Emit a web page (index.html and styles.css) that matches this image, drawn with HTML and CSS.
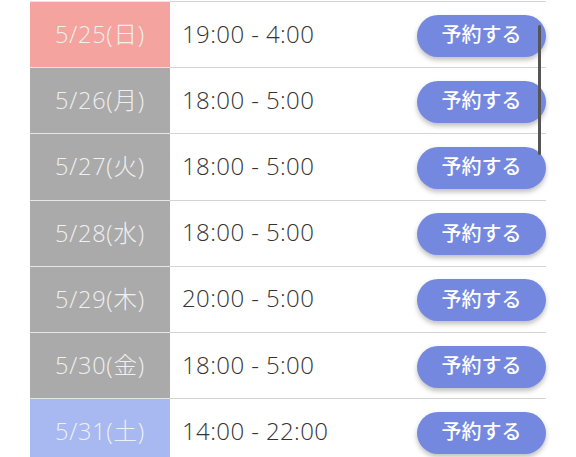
FILE: index.html
```html
<!DOCTYPE html>
<html lang="ja">
<head>
<meta charset="utf-8">
<link rel="stylesheet" href="styles.css">
</head>
<body>
<div class="wrap">
  <table class="schedule">
    <tr><td class="date sun">5/25(日)</td><td class="time">19:00 - 4:00</td><td class="act"><button class="btn">予約する</button></td></tr>
    <tr><td class="date">5/26(月)</td><td class="time">18:00 - 5:00</td><td class="act"><button class="btn">予約する</button></td></tr>
    <tr><td class="date">5/27(火)</td><td class="time">18:00 - 5:00</td><td class="act"><button class="btn">予約する</button></td></tr>
    <tr><td class="date">5/28(水)</td><td class="time">18:00 - 5:00</td><td class="act"><button class="btn">予約する</button></td></tr>
    <tr><td class="date">5/29(木)</td><td class="time">20:00 - 5:00</td><td class="act"><button class="btn">予約する</button></td></tr>
    <tr><td class="date">5/30(金)</td><td class="time">18:00 - 5:00</td><td class="act"><button class="btn">予約する</button></td></tr>
    <tr><td class="date sat">5/31(土)</td><td class="time">14:00 - 22:00</td><td class="act"><button class="btn">予約する</button></td></tr>
  </table>
  <div class="scrollthumb"></div>
</div>
</body>
</html>
```
FILE: styles.css
```css
html, body {
  margin: 0;
  padding: 0;
  background: #fff;
  overflow: hidden;
}
.wrap {
  position: relative;
  padding: 1px 30px 0 30px;
}
.schedule {
  width: 516px;
  border-collapse: collapse;
  font-family: "Open Sans", "Noto Sans CJK JP", sans-serif;
  font-weight: 300;
}
.schedule tr {
  height: 66.2px;
  border-top: 1px solid #d4d4d4;
}
.date {
  width: 140px;
  padding: 0 0 3px 0;
  text-align: center;
  background: #aaaaaa;
  color: #f0f0f0;
  font-size: 23.5px;
  letter-spacing: 0.8px;
  border-top: 1px solid #e6e6e6;
}
.date.sun { background: #f4a39f; }
.date.sat { background: #a7b9f0; }
.time {
  padding: 0 0 3px 12px;
  font-size: 24px;
  letter-spacing: 0.4px;
  color: #333;
}
.act {
  padding: 2px 0 0 0;
  text-align: right;
  width: 140px;
}
.btn {
  width: 129px;
  height: 42px;
  border: none;
  border-radius: 21px;
  background: #7488e0;
  color: #fff;
  font-family: "Noto Sans CJK JP", sans-serif;
  font-weight: 500;
  font-size: 20px;
  letter-spacing: 0;
  line-height: 1;
  padding: 0 0 3px 0;
  box-shadow: 0 3px 5px rgba(0,0,0,0.25);
}
.scrollthumb {
  position: absolute;
  left: 538px;
  top: 25px;
  width: 3px;
  height: 130px;
  background: #555;
  border-radius: 2px;
}
```
